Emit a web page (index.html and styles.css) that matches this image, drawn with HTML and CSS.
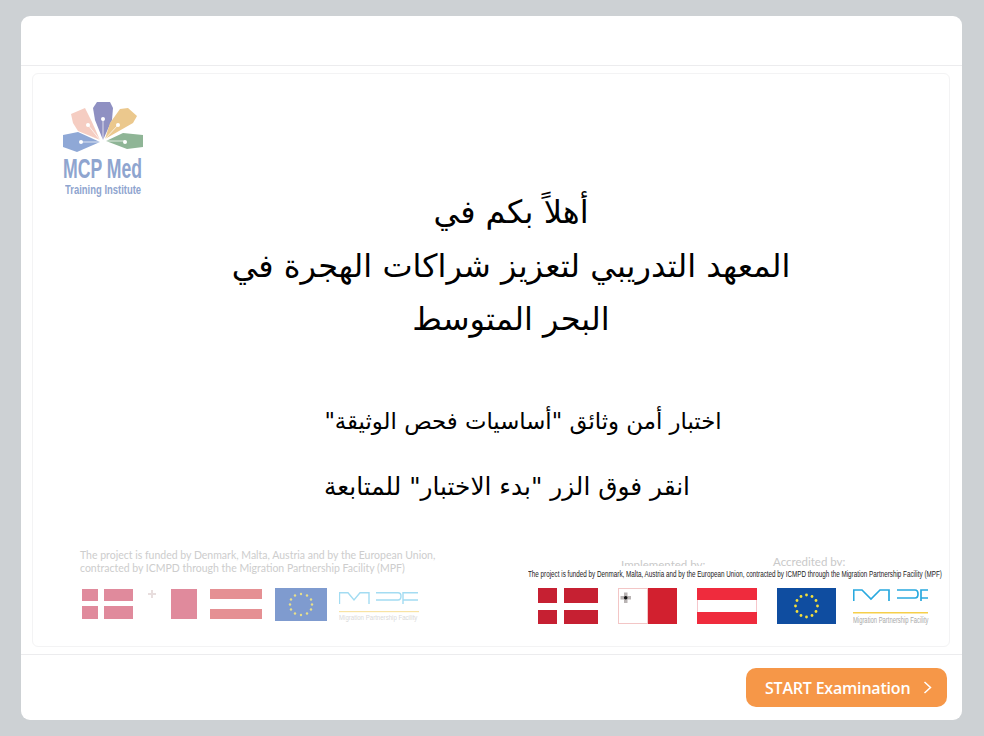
FILE: index.html
```html
<!DOCTYPE html>
<html lang="ar">
<head>
    <meta charset="utf-8">
    <title>MCP Med Training Institute</title>
    <link rel="stylesheet" href="styles.css">
</head>
<body>
    <div class="card">
        <div class="card-top"></div>
        <div class="card-body">
            <div class="slide">
                <div class="logo">
                    <svg width="84" height="52" viewBox="0 0 84 52">
                        <path d="M9 13L23 7L30 21L38 39L16 30L11 22Z" fill="#f5cdc2"/>
                        <path d="M31 7L35 1H48L51 7L50 19L41 39L33 19Z" fill="#8f90c2"/>
                        <path d="M43 38L48 22L58 8L66 7L75 15L71 22Z" fill="#ebc88d"/>
                        <path d="M38 41L16 31L1 34V46L15 51Z" fill="#8fa8d6"/>
                        <path d="M44 40L61 32L81 34V46L65 48Z" fill="#8fb596"/>
                        <path d="M38 39L26 24M41 39V18M43 38L56 24M38 41H19M44 40H63" stroke="#fff" stroke-width=".7"/>
                        <circle cx="26" cy="24" r="2" fill="#fff"/>
                        <circle cx="41" cy="18" r="2" fill="#fff"/>
                        <circle cx="56" cy="24" r="2" fill="#fff"/>
                        <circle cx="19" cy="41" r="2" fill="#fff"/>
                        <circle cx="63" cy="41" r="2" fill="#fff"/>
                    </svg>
                    <div class="logo-name">MCP Med</div>
                    <div class="logo-sub">Training Institute</div>
                </div>

                <div class="welcome" dir="rtl">
                    <h1>أهلاً بكم في<br>المعهد التدريبي لتعزيز شراكات الهجرة في<br>البحر المتوسط</h1>
                    <p class="exam-name">اختبار أمن وثائق "أساسيات فحص الوثيقة"</p>
                    <p class="exam-hint">انقر فوق الزر "بدء الاختبار" للمتابعة</p>
                </div>

                <div class="credits">
                    <div class="faded">
                        <p class="faded-text">The project is funded by Denmark, Malta, Austria and by the European Union, contracted by ICMPD through the Migration Partnership Facility (MPF)</p>
                        <div class="flags faded-flags">
                            <svg width="51" height="30" viewBox="0 0 51 30"><rect width="51" height="30" fill="#e08a9c"/><rect x="16" width="6" height="30" fill="#fff"/><rect y="12" width="51" height="5" fill="#fff"/></svg>
                            <svg class="plus" width="8" height="8" viewBox="0 0 8 8"><path d="M4 0V8M0 4H8" stroke="#e8dede" stroke-width="2"/></svg>
                            <svg width="26" height="30" viewBox="0 0 26 30"><rect width="26" height="30" fill="#e08a9c"/></svg>
                            <svg width="52" height="30" viewBox="0 0 52 30"><rect width="52" height="10" fill="#e59093"/><rect y="20" width="52" height="10" fill="#e59093"/></svg>
                            <svg class="eu-faded" width="52" height="33" viewBox="0 0 52 33"><rect width="52" height="33" fill="#7f9bcf"/><g fill="#e8df8a"><circle cx="26" cy="6" r="1.200"/><circle cx="32" cy="7.500" r="1.200"/><circle cx="36" cy="11.500" r="1.200"/><circle cx="37" cy="16.500" r="1.200"/><circle cx="36" cy="21.500" r="1.200"/><circle cx="32" cy="25.500" r="1.200"/><circle cx="26" cy="27" r="1.200"/><circle cx="20" cy="25.500" r="1.200"/><circle cx="16" cy="21.500" r="1.200"/><circle cx="15" cy="16.500" r="1.200"/><circle cx="16" cy="11.500" r="1.200"/><circle cx="20" cy="7.500" r="1.200"/></g></svg>
                            <div class="mpf mpf-faded">
                                <svg width="80" height="23" viewBox="0 0 80 23"><path d="M.5 14V2.700H9L15 10L21 2.700H30V14M37 2.700H59Q62 2.700 62 6Q62 10 59 10H37M64 14V2.700H79M64 10H79" fill="none" stroke="#a3dcf2" stroke-width="1.400"/><rect y="21" width="80" height="1.200" fill="#f8e3a4"/></svg>
                                <span>Migration Partnership Facility</span>
                            </div>
                        </div>
                    </div>
                    <div class="sharp">
                        <div class="by-labels">
                            <span class="implemented">Implemented by:</span>
                            <span class="accredited">Accredited by:</span>
                        </div>
                        <p class="sharp-text">The project is funded by Denmark, Malta, Austria and by the European Union, contracted by ICMPD through the Migration Partnership Facility (MPF)</p>
                        <div class="flags sharp-flags">
                            <svg width="60" height="36" viewBox="0 0 60 36"><rect width="60" height="36" fill="#c62032"/><rect x="19" width="7" height="36" fill="#fff"/><rect y="15" width="60" height="7" fill="#fff"/></svg>
                            <svg width="59" height="36" viewBox="0 0 59 36"><rect width="59" height="36" fill="#d2202f"/><rect x=".5" y=".5" width="29" height="35" fill="#fff" stroke="#f3c6c6"/><path d="M6 4.500h3.500V8H13v3.500H9.500V15H6v-3.500H2.500V8H6z" fill="#b9b4b4"/><circle cx="7.700" cy="9.700" r="1.800" fill="#111"/></svg>
                            <svg width="60" height="36" viewBox="0 0 60 36"><rect x=".5" y=".5" width="59" height="35" fill="#fff" stroke="#f6c6cb"/><rect width="60" height="12" fill="#ef2b3d"/><rect y="24" width="60" height="12" fill="#ef2b3d"/></svg>
                            <svg width="59" height="36" viewBox="0 0 59 36"><rect width="59" height="36" fill="#0f4da0"/><g fill="#f5e03a"><circle cx="29.500" cy="7" r="1.400"/><circle cx="35" cy="8.500" r="1.400"/><circle cx="39" cy="12.500" r="1.400"/><circle cx="40.500" cy="18" r="1.400"/><circle cx="39" cy="23.500" r="1.400"/><circle cx="35" cy="27.500" r="1.400"/><circle cx="29.500" cy="29" r="1.400"/><circle cx="24" cy="27.500" r="1.400"/><circle cx="20" cy="23.500" r="1.400"/><circle cx="18.500" cy="18" r="1.400"/><circle cx="20" cy="12.500" r="1.400"/><circle cx="24" cy="8.500" r="1.400"/></g></svg>
                            <div class="mpf mpf-sharp">
                                <svg width="76" height="26" viewBox="0 0 76 26"><path d="M.7 12V1H9L18 10L27 1H36V12M44 1H62Q65 1 65 5Q65 9 62 9H44M68 12V1H75M68 9H75" fill="none" stroke="#29a9df" stroke-width="1.700"/><rect y="23" width="75" height="1.500" fill="#f6cf4a"/></svg>
                                <span>Migration Partnership Facility</span>
                            </div>
                        </div>
                    </div>
                </div>
            </div>
        </div>
        <div class="card-bottom">
            <button class="start-btn" type="button">
                START Examination
                <svg width="9" height="13" viewBox="0 0 9 13"><path d="M1.500 1l6 5.500-6 5.500" fill="none" stroke="#fff" stroke-width="1.500"/></svg>
            </button>
        </div>
    </div>
</body>
</html>
```

FILE: styles.css
```css
body {
    margin: 0;
    background-color: #cdd1d4;
    font-family: "Open Sans", sans-serif;
}

.card {
    display: flex;
    flex-direction: column;
    width: 941px;
    height: 704px;
    margin: 16px 0 0 21px;
    background-color: #fff;
    border-radius: 9px;
}

.card-top {
    height: 49px;
    border-bottom: 1px solid #ececee;
}

.card-body {
    height: 589px;
    padding: 7px 12px 7px 11px;
    box-sizing: border-box;
    border-bottom: 1px solid #ececee;
}

.slide {
    position: relative;
    height: 574px;
    box-sizing: border-box;
    padding-top: 27px;
    border: 1px solid #f3f3f4;
    border-radius: 6px;
}

/* logo */
.logo {
    width: 84px;
    margin-left: 29px;
    color: #8fa5cf;
    font-family: "Liberation Sans", sans-serif;
    font-weight: bold;
    white-space: nowrap;
}

.logo svg {
    display: block;
}

.logo-name {
    width: max-content;
    height: 28px;
    margin-left: 1px;
    font-size: 28px;
    line-height: 32px;
    transform: scaleX(.63);
    transform-origin: left;
}

.logo-sub {
    width: max-content;
    height: 16px;
    margin-left: 3px;
    font-size: 13.500px;
    line-height: 18px;
    transform: scaleX(.7);
    transform-origin: left;
}

/* arabic text */
.welcome {
    margin-top: -11px;
    text-align: center;
    color: #000;
    font-family: "DejaVu Sans", sans-serif;
}

h1 {
    margin: 0;
    padding-left: 40px;
    font-size: 32px;
    font-weight: normal;
    line-height: 53.500px;
}

.exam-name {
    margin: 54px 0 0;
    padding-left: 64px;
    font-size: 22.800px;
    line-height: 40px;
}

.exam-hint {
    margin: 26px 0 0;
    padding-left: 32px;
    font-size: 24.800px;
    line-height: 40px;
}

/* funding strip */
.credits {
    position: absolute;
    left: 0;
    right: 0;
    top: 470px;
    display: flex;
}

.faded {
    flex: none;
    width: 495px;
    padding-left: 47px;
    box-sizing: border-box;
}

.faded-text {
    width: 370px;
    margin: 5px 0 0;
    color: #cdcdcd;
    font-family: Lato, sans-serif;
    font-size: 10.500px;
    line-height: 13px;
}

.flags {
    display: flex;
    align-items: flex-start;
}

.faded-flags {
    gap: 13px;
    margin-top: 13px;
    padding-left: 2px;
}

.faded-flags svg {
    margin-top: 1px;
}

.faded-flags .eu-faded {
    margin-top: 0;
}

.faded-flags .plus {
    margin: 2px 2px 0;
}

.mpf svg {
    display: block;
}

.mpf span {
    display: block;
    width: max-content;
    white-space: nowrap;
    font-family: "Liberation Sans", sans-serif;
    transform-origin: left;
}

.mpf-faded {
    width: 80px;
    margin-left: -1px;
}

.faded-flags .mpf-faded svg {
    margin-top: 2px;
}

.mpf-faded span {
    color: #d9d9d9;
    font-size: 8px;
    line-height: 9px;
    transform: scaleX(.76);
}

.sharp {
    flex: 1;
    min-width: 0;
}

.by-labels {
    display: flex;
    height: 22px;
    box-sizing: border-box;
    overflow: hidden;
    padding-top: 11px;
    color: #c9c9c9;
    font-family: Lato, sans-serif;
    font-size: 11.500px;
    line-height: 13px;
}

.implemented {
    width: 152px;
    margin: 3px 0 0 93px;
}

.sharp-text {
    width: max-content;
    margin: 2px 0 0;
    white-space: nowrap;
    color: #222;
    font-family: "Liberation Sans", sans-serif;
    font-size: 9px;
    line-height: 12px;
    transform: scaleX(.7);
    transform-origin: left;
}

.sharp-flags {
    gap: 20px;
    margin-top: 8px;
    padding-left: 10px;
}

.mpf-sharp {
    width: 76px;
    margin-top: 1px;
    margin-left: -3px;
}

.mpf-sharp span {
    color: #a8a8a8;
    font-size: 9px;
    line-height: 10px;
    transform: scaleX(.65);
}

/* footer */
.card-bottom {
    display: flex;
    justify-content: flex-end;
    align-items: flex-start;
    flex: 1;
    padding: 13px 15px 0 0;
}

.start-btn {
    display: flex;
    align-items: center;
    gap: 13px;
    width: 201px;
    height: 39px;
    padding: 0 0 0 19px;
    border: none;
    border-radius: 10px;
    background-color: #f69748;
    color: #fff;
    font-family: "Open Sans", sans-serif;
    font-size: 16px;
    font-weight: 600;
    letter-spacing: -.2px;
    cursor: pointer;
}
```
